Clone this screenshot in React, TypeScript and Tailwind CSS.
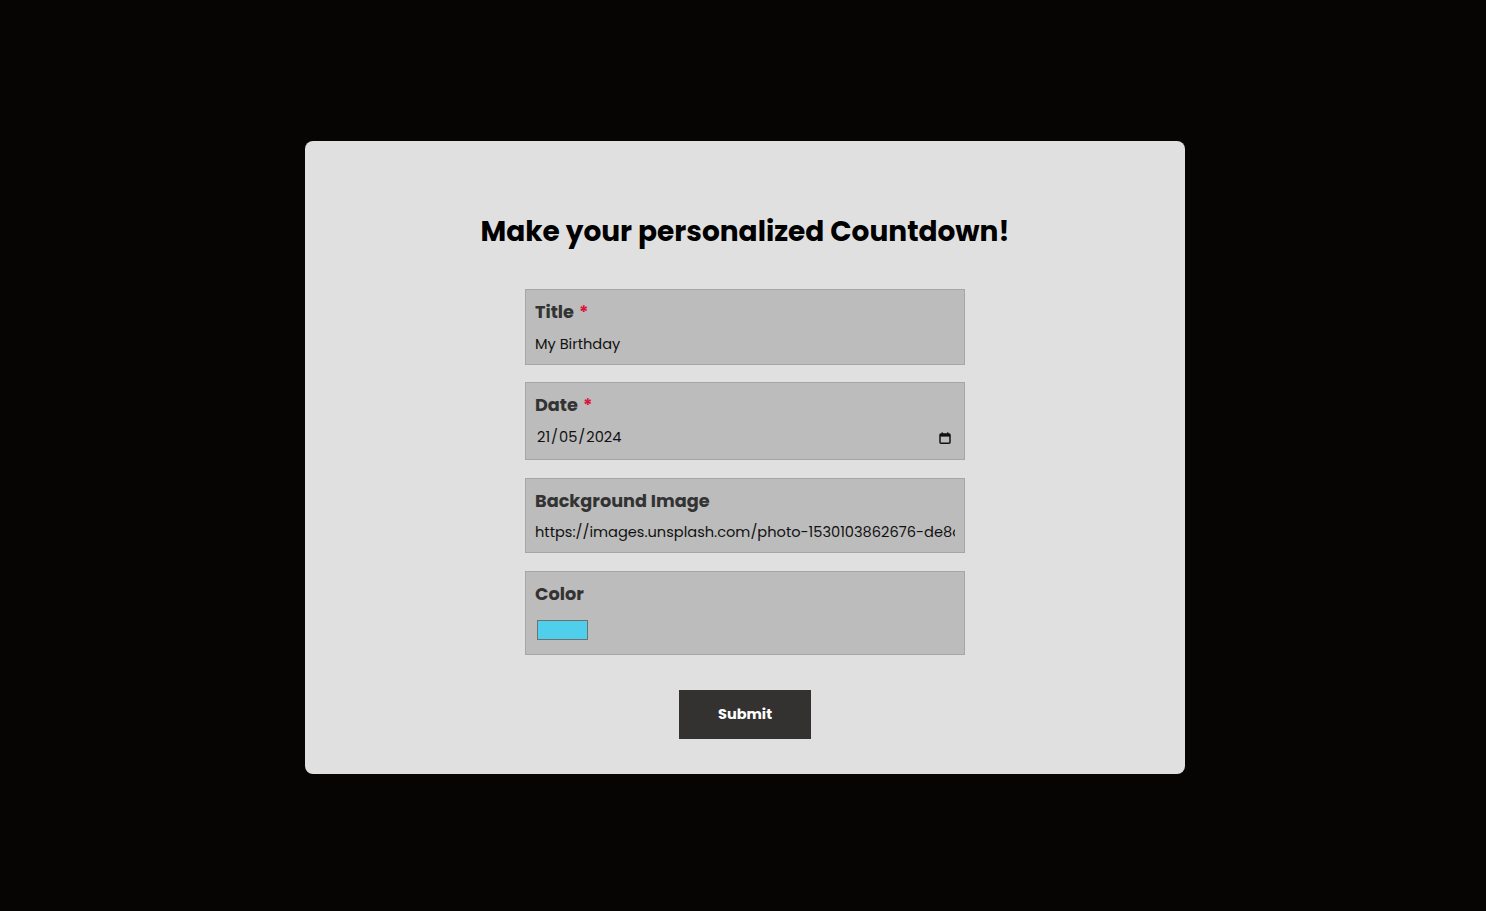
import { useState } from "react";

const font = { fontFamily: "Poppins, Inter, 'Noto Sans', sans-serif" };

function Field({
  label,
  required,
  className = "",
  children,
}: {
  label: string;
  required?: boolean;
  className?: string;
  children: React.ReactNode;
}) {
  return (
    <div className={`w-[440px] border border-[#a6a6a6] bg-[#bcbcbc] px-[9px] py-[8px] ${className}`}>
      <label className="block h-[27px] text-[17.7px] leading-[27px] font-bold text-[#333]">
        {label}
        {required && <span className="ml-[5px] text-[#dc143c]">*</span>}
      </label>
      {children}
    </div>
  );
}

function CalendarIcon() {
  return (
    <svg width="12" height="12" viewBox="0 0 12 12" className="shrink-0">
      <rect x="1" y="2" width="10" height="9.2" rx="1" fill="none" stroke="#111" strokeWidth="1.5" />
      <rect x="1" y="2" width="10" height="2.6" fill="#111" />
      <rect x="2.6" y="0.4" width="1.4" height="2.2" fill="#111" />
      <rect x="8" y="0.4" width="1.4" height="2.2" fill="#111" />
    </svg>
  );
}

export default function App() {
  const [title, setTitle] = useState("My Birthday");
  const [image, setImage] = useState(
    "https://images.unsplash.com/photo-1530103862676-de8c9debad1d?q=80&w=2070"
  );

  return (
    <div className="flex min-h-screen items-start justify-center bg-[#070404] pt-[141px] pl-[4px]" style={font}>
      <form className="flex w-[880px] flex-col items-center rounded-[8px] bg-[#e0e0e0] pt-[73px] pb-[35px]">
        <h1 className="h-[36px] text-[28px] leading-[36px] font-bold text-black">Make your personalized Countdown!</h1>

        <div className="mt-[39px] flex flex-col">
          <Field label="Title" required>
            <input
              value={title}
              onChange={(e) => setTitle(e.target.value)}
              className="mt-[7px] block h-[24px] w-full bg-transparent text-[14.6px] text-[#111] outline-none"
            />
          </Field>

          <Field label="Date" required className="mt-[17px]">
            <div className="mt-[7px] flex h-[26px] items-center justify-between pr-[4px]">
              <span className="flex pl-[1px] text-[14.6px] text-[#111]">
                <span className="px-[1px]">21</span>
                <span>/</span>
                <span className="px-[1px]">05</span>
                <span>/</span>
                <span className="px-[1px]">2024</span>
              </span>
              <CalendarIcon />
            </div>
          </Field>

          <Field label="Background Image" className="mt-[18px]">
            <input
              value={image}
              onChange={(e) => setImage(e.target.value)}
              className="mt-[6px] block h-[24px] w-[420px] bg-transparent text-[14.6px] text-[#111] outline-none"
            />
          </Field>

          <Field label="Color" className="mt-[18px]">
            <div className="mt-[7px] flex h-[32px] items-center pl-[2px]">
              <div className="h-[20px] w-[51px] border border-[#707070] bg-[#4fcfec]" />
            </div>
          </Field>
        </div>

        <button
          type="button"
          className="mt-[35px] h-[49px] w-[132px] bg-[#333231] text-[14.5px] font-bold text-white"
        >
          Submit
        </button>
      </form>
    </div>
  );
}
